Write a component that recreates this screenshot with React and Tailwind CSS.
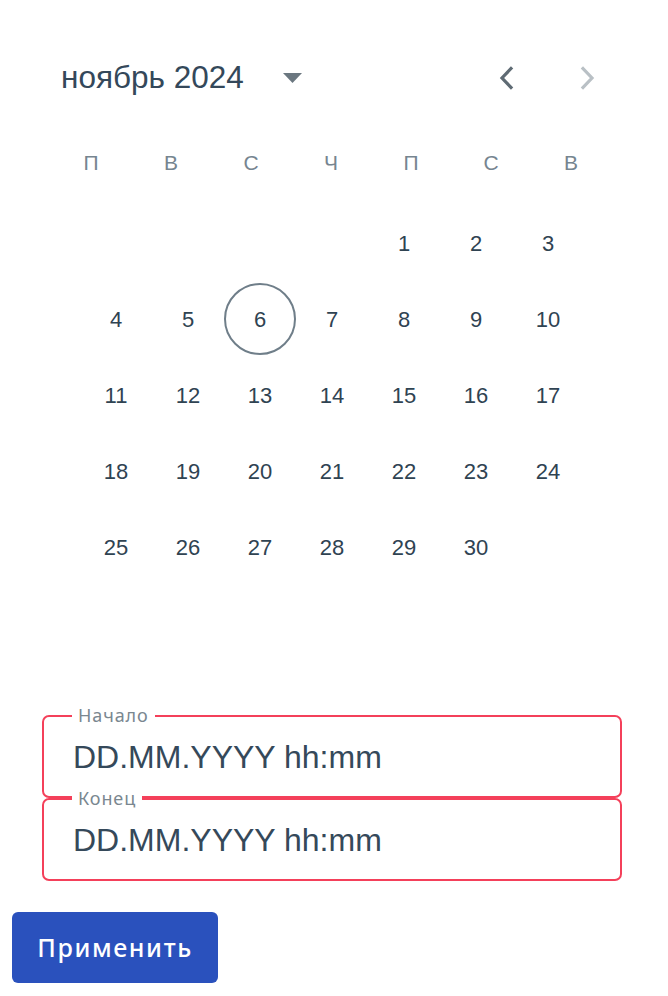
import { useState } from "react";

const weekDays = ["П", "В", "С", "Ч", "П", "С", "В"];

function ChevronLeft({ color }) {
  return (
    <svg width="16" height="24" viewBox="0 0 16 24" fill="none">
      <polyline
        points="13,2.5 4,12 13,21.5"
        stroke={color}
        strokeWidth="3.2"
        strokeLinecap="square"
        strokeLinejoin="miter"
      />
    </svg>
  );
}

function ChevronRight({ color }) {
  return (
    <svg width="16" height="24" viewBox="0 0 16 24" fill="none">
      <polyline
        points="3,2.5 12,12 3,21.5"
        stroke={color}
        strokeWidth="3.2"
        strokeLinecap="square"
        strokeLinejoin="miter"
      />
    </svg>
  );
}

function DateField({ label }) {
  return (
    <div className="relative h-[83px] border-2 border-[#f4405a] rounded-[7px] flex items-center pl-[29px]">
      <span
        className="absolute -top-[14px] left-[28px] px-[6px] bg-white text-[18px] leading-[24px] tracking-[0.9px] text-[#7a8790]"
        style={{ fontFamily: '"Noto Sans", sans-serif' }}
      >
        {label}
      </span>
      <span className="text-[32px] leading-none text-[#35495a]">
        DD.MM.YYYY hh:mm
      </span>
    </div>
  );
}

export default function App() {
  const [selected, setSelected] = useState(6);

  // Nov 2024 starts on Friday
  const cells = [];
  for (let i = 0; i < 4; i++) cells.push(null);
  for (let d = 1; d <= 30; d++) cells.push(d);

  return (
    <div
      className="w-[668px] h-[996px] bg-white overflow-hidden"
      style={{ fontFamily: '"Liberation Sans", Arial, sans-serif' }}
    >
      {/* HEADER */}
      <div className="mt-[58px] h-[40px] flex items-center pl-[61px] pr-[72px]">
        <span className="text-[31.5px] leading-none text-[#34485a]">
          ноябрь 2024
        </span>
        <svg className="ml-[39px]" width="19" height="10" viewBox="0 0 19 10">
          <polygon points="0,0 19,0 9.5,10" fill="#6b7780" />
        </svg>
        <div className="ml-auto flex items-center gap-[66px]">
          <ChevronLeft color="#5f6b74" />
          <ChevronRight color="#b9c0c5" />
        </div>
      </div>

      {/* WEEKDAYS */}
      <div className="mt-[45px] ml-[51px] w-[560px] h-[40px] grid grid-cols-7">
        {weekDays.map((w, i) => (
          <div
            key={i}
            className="flex items-center justify-center text-[21px] text-[#768590]"
          >
            {w}
          </div>
        ))}
      </div>

      {/* DAYS */}
      <div className="mt-[22px] ml-[80px] w-[504px] grid grid-cols-7 auto-rows-[76px]">
        {cells.map((d, i) => (
          <div key={i} className="flex items-center justify-center">
            {d && (
              <button
                onClick={() => setSelected(d)}
                className={`w-[72px] h-[72px] rounded-full flex items-center justify-center text-[22px] text-[#2f4352] ${
                  selected === d
                    ? "border-2 border-[#6f7e89]"
                    : ""
                }`}
              >
                {d}
              </button>
            )}
          </div>
        ))}
      </div>

      {/* FIELDS */}
      <div className="mt-[130px] mx-[42px] w-[580px] flex flex-col">
        <DateField label="Начало" />
        <DateField label="Конец" />
      </div>

      <button
        className="mt-[31px] ml-[12px] w-[206px] h-[71px] rounded-[6px] bg-[#2a51bd] text-white text-[25px] font-medium tracking-[1.6px] flex items-center justify-center"
        style={{ fontFamily: '"Noto Sans", sans-serif' }}
      >
        Применить
      </button>
    </div>
  );
}
